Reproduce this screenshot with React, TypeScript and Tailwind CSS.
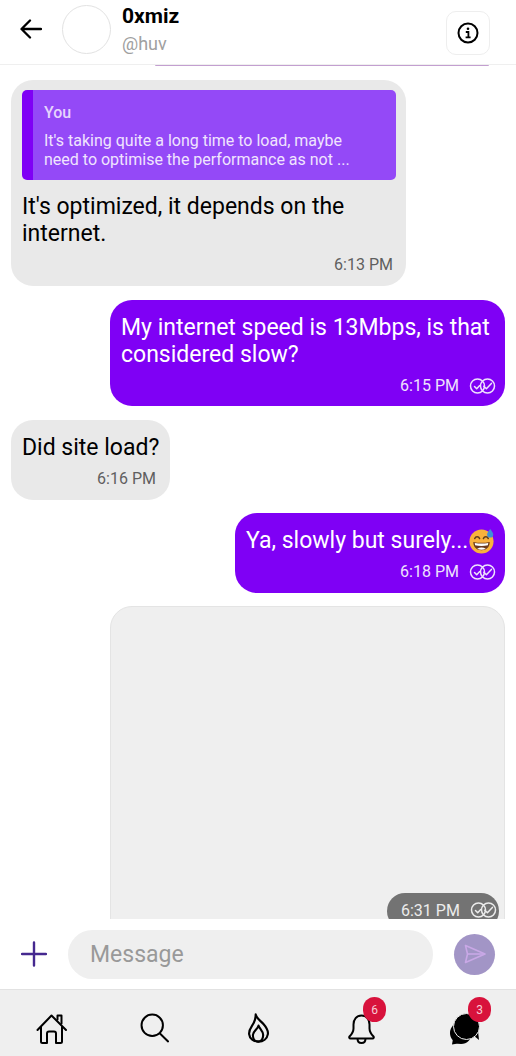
const font = { fontFamily: "Roboto, sans-serif" };

function DoubleCheck({ className }: { className?: string }) {
  return (
    <svg viewBox="0 0 27 16" className={className} fill="none" stroke="currentColor" strokeWidth="1.500">
      <circle cx="8.500" cy="8" r="7" />
      <circle cx="18.500" cy="8" r="7" />
      <path d="M5.500 8.500l2.200 2.300 3-3.200" strokeLinecap="round" strokeLinejoin="round" />
      <path d="M14.800 8.200l2.600 2.600 5-5.400" strokeLinecap="round" strokeLinejoin="round" />
    </svg>
  );
}

function SweatEmoji() {
  return (
    <svg viewBox="0 0 28 28" className="h-[27px] w-[27px] shrink-0">
      <circle cx="14" cy="15" r="12.500" fill="#f9b23c" />
      <path d="M7 12c1-2.600 4-2.600 5 0M16 12c1-2.600 4-2.600 5 0" fill="none" stroke="#5b3a1e" strokeWidth="1.600" strokeLinecap="round" />
      <path d="M5.500 15.500c5.500 1.200 11.500 1.200 17 0 0 5.500-3.600 8.500-8.500 8.500s-8.500-3-8.500-8.500z" fill="#6b3a1e" />
      <path d="M7 16.500c4.600.9 9.400.9 14 0l-.4 2.500c-4.400.9-8.800.9-13.200 0z" fill="#fff" />
      <path d="M9.500 22.500c2.800-1.600 6.200-1.600 9 0-2.600 1.600-6.400 1.600-9 0z" fill="#fff" />
      <path d="M23 2c1.600 2.400 3.200 3.900 3.200 5.800a3.200 3.200 0 0 1-6.400 0C19.800 5.900 21.400 4.400 23 2z" fill="#3f8fd8" />
    </svg>
  );
}

function Time({ time, checks }: { time: string; checks?: boolean }) {
  return (
    <div className="mt-[7px] flex h-[21px] items-center justify-end gap-[10px] text-[16px] leading-[21px]">
      <span>{time}</span>
      {checks && <DoubleCheck className="h-[16px] w-[27px]" />}
    </div>
  );
}

function NavBadge({ count, className }: { count: number; className: string }) {
  return (
    <span className={`absolute flex h-[25px] w-[23px] items-center justify-center rounded-full bg-[#d8123c] text-[12px] text-[#f7ccd6] ${className}`}>
      {count}
    </span>
  );
}

export default function App() {
  return (
    <div className="flex h-[1056px] w-[516px] flex-col overflow-hidden bg-white text-black" style={font}>
      <header className="flex h-[65px] shrink-0 items-start border-b border-[#efefef] pl-[20px] pr-[26px]">
        <svg viewBox="0 0 22 20" className="mt-[19px] h-[20px] w-[22px] shrink-0" fill="none" stroke="black" strokeWidth="2.300" strokeLinecap="round" strokeLinejoin="round">
          <path d="M21 10H2M10 1.500L1.500 10l8.500 8.500" />
        </svg>
        <div className="ml-[20px] mt-[5px] h-[49px] w-[49px] shrink-0 rounded-full border border-[#e2e2e2]" />
        <div className="ml-[11px] flex-1">
          <div className="mt-[4px] text-[21px] font-bold leading-[25px]">0xmiz</div>
          <div className="mt-[4px] text-[18px] leading-[22px] text-[#a0a0a0]">@huv</div>
        </div>
        <button className="mt-[11px] flex h-[44px] w-[44px] items-center justify-center rounded-[10px] border border-[#eeeeee]">
          <svg viewBox="0 0 22 22" className="h-[22px] w-[22px]" fill="none" stroke="black">
            <circle cx="11" cy="11" r="9.500" strokeWidth="2" />
            <circle cx="11" cy="6.800" r="1.300" fill="black" stroke="none" />
            <path d="M8.800 10h2.600v5.200M8.600 15.400h5" strokeWidth="1.800" />
          </svg>
        </button>
      </header>

      <main className="min-h-0 flex-1 overflow-hidden">
        <div className="ml-[155px] mr-[27px] h-px rounded-b bg-[#c39fd0]" />
        <div className="mt-[14px] flex flex-col px-[11px]">
          <div className="h-[206px] w-[395px] rounded-[22px] bg-[#e9e9e9] pl-[11px] pr-[13px] pt-[10px]">
            <div className="h-[90px] w-[374px] rounded-[5px] border-l-[11px] border-[#7f00f5] bg-[#9449f7] pl-[11px] pt-[12px] text-[#f0e4fe]">
              <div className="text-[16px] font-medium leading-[21px] text-[#e6d5fd]">You</div>
              <div className="mt-[8px] whitespace-nowrap text-[16px] leading-[19px]">
                It's taking quite a long time to load, maybe
                <br />
                need to optimise the performance as not ...
              </div>
            </div>
            <p className="mt-[13px] text-[23px] leading-[27px]">It's optimized, it depends on the internet.</p>
            <div className="text-[#5f5f5f]">
              <Time time="6:13 PM" />
            </div>
          </div>

          <div className="mt-[14px] h-[106px] w-[395px] self-end rounded-[22px] bg-[#7f00f5] pl-[11px] pr-[9px] pt-[14px] text-white">
            <p className="text-[23px] leading-[27px]">My internet speed is 13Mbps, is that considered slow?</p>
            <div className="text-[#efe2fd]">
              <Time time="6:15 PM" checks />
            </div>
          </div>

          <div className="mt-[14px] h-[80px] w-[159px] rounded-[22px] bg-[#e9e9e9] pl-[11px] pr-[14px] pt-[14px]">
            <p className="whitespace-nowrap text-[23px] leading-[27px]">Did site load?</p>
            <div className="text-[#5f5f5f]">
              <Time time="6:16 PM" />
            </div>
          </div>

          <div className="mt-[13px] h-[80px] w-[270px] self-end rounded-[22px] bg-[#7f00f5] pl-[11px] pr-[9px] pt-[14px] text-white">
            <p className="flex h-[27px] items-center whitespace-nowrap text-[23px] leading-[27px]">
              Ya, slowly but surely...
              <SweatEmoji />
            </p>
            <div className="text-[#efe2fd]">
              <Time time="6:18 PM" checks />
            </div>
          </div>

          <div className="relative mt-[13px] h-[340px] w-[395px] shrink-0 self-end rounded-[22px] border border-[#e4e4e4] bg-[#efefef]">
            <div className="absolute left-[276px] top-[286px] flex h-[36px] w-[112px] items-start gap-[10px] rounded-[18px] bg-[#737373] pl-[14px] pt-[7px] text-[16px] leading-[21px] text-[#ececec]">
              <span>6:31 PM</span>
              <DoubleCheck className="mt-[2px] h-[16px] w-[27px]" />
            </div>
          </div>
        </div>
      </main>

      <div className="flex h-[70px] shrink-0 items-center bg-white pl-[21px] pr-[21px]">
        <svg viewBox="0 0 26 26" className="h-[26px] w-[26px] shrink-0" fill="none" stroke="#45288f" strokeWidth="2.400" strokeLinecap="round">
          <path d="M13 1.500v23M1 13h24" />
        </svg>
        <div className="ml-[21px] flex h-[49px] w-[365px] items-center rounded-full bg-[#efefef] pl-[22px] pt-[3px] text-[23px] text-[#999999]">
          Message
        </div>
        <div className="ml-[21px] flex h-[41px] w-[41px] items-center justify-center rounded-full bg-[#a295c6]">
          <svg viewBox="0 0 24 24" className="h-[24px] w-[24px]" fill="none" stroke="#c9a8e6" strokeWidth="1.600" strokeLinejoin="round">
            <path d="M2.500 3.500L22 12 2.500 20.500l2-8.500z" />
            <path d="M4.500 12H22" />
          </svg>
        </div>
      </div>

      <nav className="flex h-[67px] shrink-0 items-start border-t border-[#e2e2e2] bg-[#efefef] pl-[36px] pt-[23px]">
        <svg viewBox="0 0 32 32" className="h-[32px] w-[32px]" fill="none" stroke="black" strokeWidth="2" strokeLinejoin="round" strokeLinecap="round">
          <path d="M1.500 17L15.500 2.500 30 17" />
          <path d="M5 14v14.500a1.500 1.500 0 0 0 1.500 1.500H11V20.500a2 2 0 0 1 2-2h5a2 2 0 0 1 2 2V30h4.500a1.500 1.500 0 0 0 1.500-1.500V14" />
          <path d="M21.500 6.500V2.500h4v8" />
        </svg>
        <svg viewBox="0 0 32 32" className="ml-[72px] h-[30px] w-[29px]" fill="none" stroke="black" strokeWidth="2.200" strokeLinecap="round">
          <circle cx="13.500" cy="13" r="11.800" />
          <path d="M22 22l9 8.800" />
        </svg>
        <svg viewBox="0 0 24 32" className="ml-[78px] h-[30px] w-[23px]" fill="none" stroke="black" strokeWidth="2.300" strokeLinejoin="round">
          <path d="M9 1.500c1 4.500 5 6.500 8.500 10.500 3.500 4 5 7 4.500 10.500-.8 5-5 8-10 8s-9.500-3-10-8c-.5-5 3-8 5-12 1.200-2.500 2-5.500 2-9z" />
          <path d="M12 13.500c1 3 5 5.500 5 10s-2.500 7-5.500 7-5.500-2.500-5.500-7c0-4 5-6 6-10z" />
        </svg>
        <div className="relative ml-[78px] h-[32px] w-[27px]">
          <svg viewBox="0 0 27 32" className="h-[32px] w-[27px]" fill="none" stroke="black" strokeWidth="2" strokeLinejoin="round">
            <path d="M13.500 2.500c-5 0-8 4-8 9v4c0 3.500-2 6-4 8-.6.700-.2 2 1 2h22c1.200 0 1.600-1.300 1-2-2-2-4-4.500-4-8v-4c0-5-3-9-8-9z" />
            <path d="M9.500 25.500c0 3 1.800 4.500 4 4.500s4-1.500 4-4.500" />
          </svg>
          <NavBadge count={6} className="left-[15px] top-[-16px]" />
        </div>
        <div className="relative ml-[74px] h-[32px] w-[31px]">
          <svg viewBox="0 0 31 32" className="h-[32px] w-[31px]" fill="black">
            <circle cx="12" cy="20" r="11" />
            <path d="M4 26l-1 5.500 9-1.500z" />
            <path d="M24 22l6 5-1-9z" />
            <circle cx="17.500" cy="13.500" r="13" stroke="#efefef" strokeWidth="1" />
          </svg>
          <NavBadge count={3} className="left-[19px] top-[-16px]" />
        </div>
      </nav>
    </div>
  );
}
